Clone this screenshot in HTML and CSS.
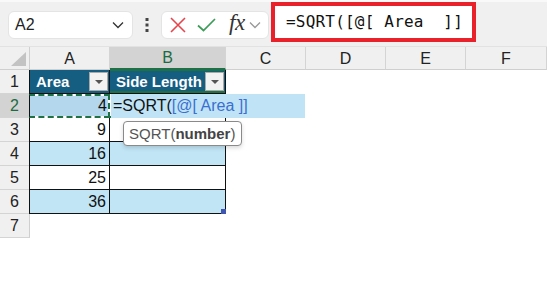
FILE: index.html
```html
<!DOCTYPE html>
<html lang="en">
<head>
    <meta charset="UTF-8">
    <title>SQRT formula</title>
    <link rel="stylesheet" href="styles.css">
</head>
<body>
    <div class="toolbar">
        <div class="namebox">
            <span>A2</span>
            <svg class="chev" width="12" height="8" viewBox="0 0 12 8"><path d="M1 1.5 L6 6.5 L11 1.5" fill="none" stroke="#333" stroke-width="1.3"/></svg>
        </div>
        <svg class="grip" width="4" height="14" viewBox="0 0 4 14"><rect x="0.5" y="0" width="3" height="3" fill="#444"/><rect x="0.5" y="5.5" width="3" height="3" fill="#444"/><rect x="0.5" y="11" width="3" height="3" fill="#444"/></svg>
        <div class="fbuttons">
            <svg width="16" height="16" viewBox="0 0 16 16"><path d="M1 1 L15 15 M15 1 L1 15" stroke="#e8444d" stroke-width="1.6" fill="none"/></svg>
            <svg width="19" height="14" viewBox="0 0 19 14"><path d="M1 7.5 L6.5 12.5 L18 1" stroke="#3b9d57" stroke-width="1.7" fill="none"/></svg>
            <span class="fx">fx</span>
            <svg width="12" height="8" viewBox="0 0 12 8"><path d="M1 1.5 L6 6.5 L11 1.5" fill="none" stroke="#999" stroke-width="1.3"/></svg>
        </div>
        <div class="formula">=SQRT([@[ Area  ]]</div>
    </div>

    <div class="sheet">
        <div class="corner"><span class="tri"></span></div>
        <div class="colhead">A</div>
        <div class="colhead active">B</div>
        <div class="colhead">C</div>
        <div class="colhead">D</div>
        <div class="colhead">E</div>
        <div class="colhead">F</div>

        <div class="rowhead">1</div>
        <div class="cell tc th first">Area<span class="filter"></span></div>
        <div class="cell tc th above-active">Side Length<span class="filter"></span></div>
        <div class="cell"></div><div class="cell"></div><div class="cell"></div><div class="cell"></div>

        <div class="rowhead active">2</div>
        <div class="cell tc first num ants">4</div>
        <div class="cell tc editing">
            <div class="editor">=SQRT(<span class="ref">[@[ Area ]]</span></div>
        </div>
        <div class="cell"></div><div class="cell"></div><div class="cell"></div><div class="cell"></div>

        <div class="rowhead">3</div>
        <div class="cell tc first num">9</div>
        <div class="cell tc"></div>
        <div class="cell"></div><div class="cell"></div><div class="cell"></div><div class="cell"></div>

        <div class="rowhead">4</div>
        <div class="cell tc first num band">16</div>
        <div class="cell tc band"></div>
        <div class="cell"></div><div class="cell"></div><div class="cell"></div><div class="cell"></div>

        <div class="rowhead">5</div>
        <div class="cell tc first num">25</div>
        <div class="cell tc"></div>
        <div class="cell"></div><div class="cell"></div><div class="cell"></div><div class="cell"></div>

        <div class="rowhead">6</div>
        <div class="cell tc first num band">36</div>
        <div class="cell tc band last"><span class="handle"></span></div>
        <div class="cell"></div><div class="cell"></div><div class="cell"></div><div class="cell"></div>

        <div class="rowhead">7</div>
        <div class="cell"></div><div class="cell"></div>
        <div class="cell"></div><div class="cell"></div><div class="cell"></div><div class="cell"></div>

        <div class="tooltip">SQRT(<b>number</b>)</div>
    </div>
</body>
</html>
```

FILE: styles.css
```css
body {
    margin: 0;
    background: #ffffff;
    font-family: 'Liberation Sans', Arial, sans-serif;
    width: 547px;
    height: 287px;
    overflow: hidden;
}

.toolbar {
    display: flex;
    align-items: center;
    height: 47px;
    box-sizing: border-box;
    background: #f0f0f0;
    border-top: 2px solid #f9f9f9;
    border-bottom: 1px solid #e2e2e2;
    padding-left: 8px;
}

.namebox {
    display: flex;
    align-items: center;
    justify-content: space-between;
    width: 125px;
    height: 28px;
    box-sizing: border-box;
    background: white;
    border: 1px solid #e4e4e4;
    border-radius: 6px;
    padding: 0 8px 0 6px;
    font-size: 16px;
    color: #222;
    margin-top: 1px;
}

.grip {
    margin: 1px 12px 0 12px;
}

.fbuttons {
    display: flex;
    align-items: center;
    width: 108px;
    height: 28px;
    box-sizing: border-box;
    background: white;
    border: 1px solid #e4e4e4;
    border-radius: 6px;
    padding-left: 8px;
    gap: 11px;
    margin-top: 1px;
}

.fbuttons .fx {
    font-family: 'Liberation Serif', 'Times New Roman', serif;
    font-style: italic;
    font-size: 23px;
    color: #333;
    margin: -4px -7px 0 2px;
    letter-spacing: -0.5px;
}

.formula {
    width: 205px;
    height: 40px;
    box-sizing: border-box;
    margin-left: 2px;
    margin-top: -5px;
    border: 4px solid #e8212a;
    background: white;
    font-family: 'DejaVu Sans Mono', 'Liberation Mono', monospace;
    font-size: 16px;
    letter-spacing: 0.2px;
    color: #111;
    padding: 6px 0 0 11px;
    white-space: pre;
}

.sheet {
    position: relative;
    display: grid;
    grid-template-columns: 30px 80px 116px 80px 80px 80px 81px;
    grid-template-rows: 23px repeat(7, 24px);
    height: 191px;
    overflow: hidden;
}

.corner {
    position: relative;
    background: #f0f0f0;
    border-bottom: 1px solid #cfcfcf;
    border-right: 1px solid #cfcfcf;
    box-sizing: border-box;
}

.corner .tri {
    position: absolute;
    right: 3px;
    bottom: 3px;
    width: 0;
    height: 0;
    border-left: 15px solid transparent;
    border-bottom: 14px solid #c3c3c3;
}

.colhead {
    background: #f0f0f0;
    border-right: 1px solid #d4d4d4;
    border-bottom: 1px solid #cfcfcf;
    box-sizing: border-box;
    text-align: center;
    font-size: 16px;
    line-height: 23px;
    color: #222;
}

.colhead.active {
    background: #d3d3d3;
    color: #1d6b3e;
    border-bottom: 2px solid #1e7145;
    line-height: 22px;
}

.rowhead {
    background: #f0f0f0;
    border-right: 1px solid #cfcfcf;
    border-bottom: 1px solid #d4d4d4;
    box-sizing: border-box;
    text-align: center;
    font-size: 16px;
    line-height: 24px;
    color: #222;
}

.rowhead.active {
    background: #d3d3d3;
    color: #1d6b3e;
}

.cell {
    position: relative;
    box-sizing: border-box;
    font-size: 16px;
    line-height: 23px;
    color: #111;
}

.tc {
    border-right: 1px solid #111;
    border-bottom: 1px solid #111;
}

.tc.first {
    border-left: 1px solid #111;
    margin-left: -1px;
}

.th {
    background: #165d82;
    color: white;
    font-weight: bold;
    font-size: 15px;
    padding-left: 6px;
    line-height: 23px;
}

.above-active {
    box-shadow: inset 0 -2px 0 #1e7145, inset 0 1px 0 #1e7145;
}

.filter {
    position: absolute;
    right: 1px;
    top: 2px;
    width: 19px;
    height: 19px;
    box-sizing: border-box;
    background: #f2f2f2;
    border: 1px solid #a9a9a9;
}

.filter::after {
    content: "";
    position: absolute;
    left: 5px;
    top: 7px;
    border-left: 4px solid transparent;
    border-right: 4px solid transparent;
    border-top: 4px solid #555;
}

.num {
    text-align: right;
    padding-right: 3px;
}

.band {
    background: #c1e5f5;
}

.ants {
    border: 2px dashed #1e7145;
    margin-left: 0;
    background: linear-gradient(#b4d7ee, #b4d7ee) padding-box, linear-gradient(#fff, #fff) border-box;
    line-height: 20px;
    padding-right: 1px;
}

.editing::after {
    content: "";
    position: absolute;
    left: 0;
    bottom: -1px;
    width: 113px;
    height: 2px;
    background: #1e7145;
}

.editor {
    position: absolute;
    left: 1px;
    top: 0;
    width: 194px;
    height: 24px;
    background: #c0e4f5;
    padding-left: 2px;
    box-sizing: border-box;
    font-size: 16px;
    line-height: 23px;
    white-space: nowrap;
    color: #111;
    z-index: 1;
}

.editor .ref {
    color: #3b6fd1;
}

.handle {
    position: absolute;
    right: -1px;
    bottom: -1px;
    width: 5px;
    height: 5px;
    background: #3f55b0;
}

.tooltip {
    position: absolute;
    left: 123px;
    top: 74px;
    height: 25px;
    box-sizing: border-box;
    padding: 0 6px 0 5px;
    background: white;
    border: 1px solid #8a8a8a;
    border-radius: 4px;
    box-shadow: 0 2px 4px rgba(0,0,0,0.15);
    font-size: 15px;
    line-height: 23px;
    color: #555;
    z-index: 2;
}

.tooltip b {
    color: #444;
}
```
